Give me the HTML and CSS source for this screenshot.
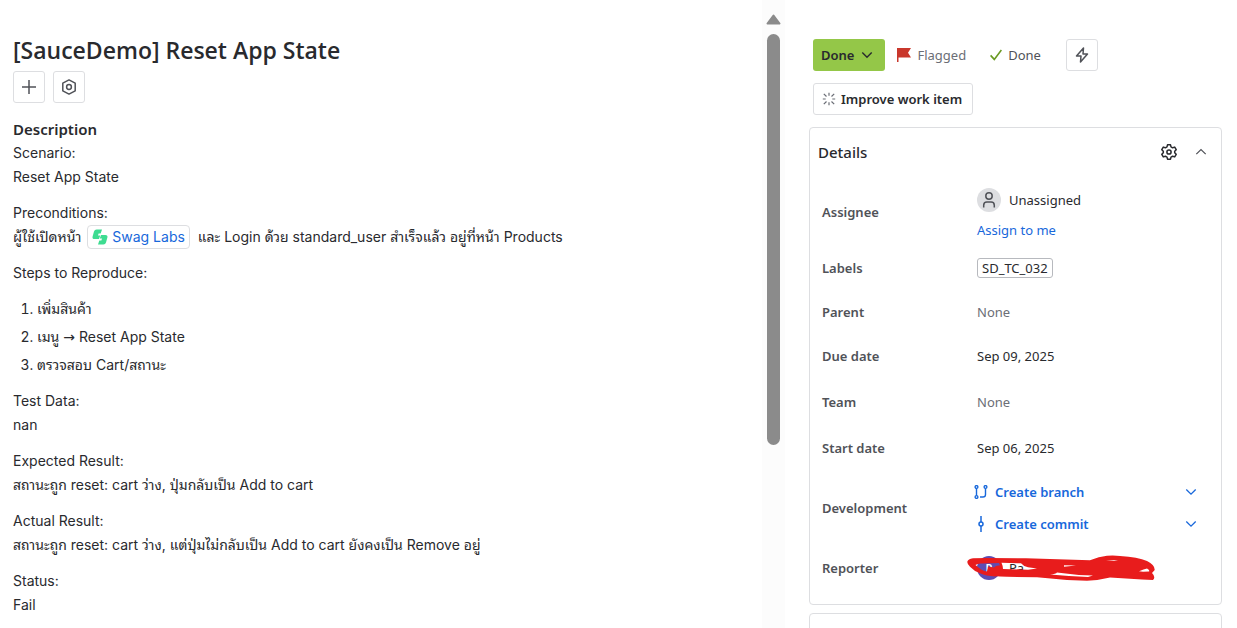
FILE: index.html
```html
<!DOCTYPE html>
<html lang="en">
<head>
<meta charset="utf-8">
<title>[SauceDemo] Reset App State</title>
<link rel="stylesheet" href="styles.css">
</head>
<body>
<div class="page">
  <main class="issue">
    <h1 class="issue-title">[SauceDemo] Reset App State</h1>
    <div class="toolbar">
      <button class="icon-button" type="button" aria-label="Add">
        <svg width="16" height="16" viewBox="0 0 16 16" fill="none" stroke="#505258" stroke-width="1.5"><path d="M8 1v14M1 8h14"/></svg>
      </button>
      <button class="icon-button" type="button" aria-label="Apps">
        <svg width="16" height="16" viewBox="0 0 16 16" fill="none" stroke="#505258" stroke-width="1.5" stroke-linejoin="round"><path d="M8 .9 14.2 4.2v7.6L8 15.1 1.8 11.800V4.200z"/><circle cx="8" cy="8" r="2.400"/></svg>
      </button>
    </div>
    <h2 class="section-title">Description</h2>
    <div class="description">
      <p>Scenario:<br>Reset App State</p>
      <p>Preconditions:<br>ผู้ใช้เปิดหน้า <a class="smart-link" href="#"><svg width="16" height="16" viewBox="0 0 16 16" fill="#3ddc91"><path d="M4.600.5H10L8.700 4.600H6.600L6 6.600H8.200L7 10H2.600Q0 10 .6 7.400L2 2.500Q2.600.5 4.600.5z"/><path d="M11.400 15.500H6L7.300 11.400H9.400L10 9.400H7.800L9 6H13.400Q16 6 15.400 8.600L14 13.500Q13.400 15.500 11.400 15.500z"/></svg>Swag Labs</a> และ Login ด้วย standard_user สำเร็จแล้ว อยู่ที่หน้า Products</p>
      <p>Steps to Reproduce:</p>
      <ol class="steps">
        <li>เพิ่มสินค้า</li>
        <li>เมนู <span class="arrow">→</span> Reset App State</li>
        <li>ตรวจสอบ Cart/สถานะ</li>
      </ol>
      <p>Test Data:<br>nan</p>
      <p>Expected Result:<br>สถานะถูก reset: cart ว่าง, ปุ่มกลับเป็น Add to cart</p>
      <p>Actual Result:<br>สถานะถูก reset: cart ว่าง, แต่ปุ่มไม่กลับเป็น Add to cart ยังคงเป็น Remove อยู่</p>
      <p>Status:<br>Fail</p>
    </div>
  </main>

  <div class="scroll-track" aria-hidden="true">
    <svg width="15" height="11" viewBox="0 0 15 11"><path d="M7.500 1.500 13.500 9.500h-12z" fill="#8b8b8b" stroke="#8b8b8b" stroke-width="2" stroke-linejoin="round"/></svg>
    <div class="scroll-thumb"></div>
  </div>

  <aside class="sidebar">
    <div class="status-bar">
      <button class="status-button" type="button">Done
        <svg width="12" height="12" viewBox="0 0 12 12" fill="none" stroke="#292a2e" stroke-width="1.400"><path d="m1.300 3.500 4.700 4.700 4.700-4.700"/></svg>
      </button>
      <span class="flagged"><svg width="14" height="14" viewBox="0 0 14 14" fill="#c9372c"><path d="M0 0h14l-3 4.700 3 4.800H1.500V14H0z"/></svg>Flagged</span>
      <span class="resolution"><svg width="12" height="12" viewBox="0 0 12 12" fill="none" stroke="#6a9a23" stroke-width="1.600"><path d="m.6 6.400 3.700 4L11.400 1"/></svg>Done</span>
      <button class="icon-button" type="button" aria-label="Automation">
        <svg width="16" height="16" viewBox="0 0 16 16" fill="none" stroke="#505258" stroke-width="1.500" stroke-linejoin="round"><path d="M9.500 1 2.500 9H7L6.500 15 13.500 7H9z"/></svg>
      </button>
    </div>
    <button class="improve-button" type="button">
      <svg width="14" height="14" viewBox="0 0 14 14" fill="none" stroke="#6b6e76" stroke-width="1.200"><path d="M7 .8v2.900M7 10.300v2.900M.8 7h2.900M10.300 7h2.900M1.800 1.800 4.500 4.500M12.200 1.800 9.500 4.500M1.800 12.200 4.500 9.500M12.200 12.200 9.500 9.500"/></svg>
      Improve work item
    </button>

    <section class="card">
      <header class="card-header">
        <h2 class="card-title">Details</h2>
        <button class="plain-button" type="button" aria-label="Configure fields">
          <svg width="16" height="16" viewBox="0 0 16 16" fill="none" stroke="#292a2e" stroke-width="1.500" stroke-linejoin="round"><path d="M6.500.8h3l.5 2.100 1.600.9 2.100-.7 1.500 2.600L13.700 7.200v1.600l1.500 1.500-1.500 2.600-2.100-.7-1.600.9-.5 2.100h-3L6 13.100l-1.600-.9-2.100.7L.8 10.300l1.500-1.500V7.200L.8 5.700l1.500-2.600 2.100.7L6 2.900z"/><circle cx="8" cy="8" r="2.100"/></svg>
        </button>
        <button class="plain-button" type="button" aria-label="Collapse details">
          <svg width="12" height="12" viewBox="0 0 12 12" fill="none" stroke="#505258" stroke-width="1.200"><path d="m1.300 8.200 4.700-4.700 4.700 4.700"/></svg>
        </button>
      </header>
      <dl class="fields">
        <div class="field field-assignee">
          <dt>Assignee</dt>
          <dd>
            <div class="person">
              <span class="avatar"><svg width="16" height="16" viewBox="0 0 16 16" fill="none" stroke="#505258" stroke-width="1.500"><circle cx="8" cy="4" r="3.200"/><path d="M2.700 15.500v-2.300q0-3.200 3.200-3.200h4.200q3.200 0 3.200 3.200v2.300"/></svg></span>
              Unassigned
            </div>
            <a class="assign-link" href="#">Assign to me</a>
          </dd>
        </div>
        <div class="field"><dt>Labels</dt><dd><span class="tag">SD_TC_032</span></dd></div>
        <div class="field"><dt>Parent</dt><dd class="muted">None</dd></div>
        <div class="field"><dt>Due date</dt><dd>Sep 09, 2025</dd></div>
        <div class="field field-team"><dt>Team</dt><dd class="muted">None</dd></div>
        <div class="field"><dt>Start date</dt><dd>Sep 06, 2025</dd></div>
        <div class="field field-development">
          <dt>Development</dt>
          <dd class="development">
            <button class="dev-button" type="button">
              <svg width="14" height="14" viewBox="0 0 14 14" fill="none" stroke="#1868db" stroke-width="1.400"><circle cx="2.500" cy="2" r="1.400"/><circle cx="2.500" cy="12" r="1.400"/><circle cx="11.500" cy="2" r="1.400"/><path d="M2.500 3.400v7.200M11.500 3.400v6q0 2.600-2.600 2.600H6"/></svg>
              <span>Create branch</span>
              <svg width="12" height="12" viewBox="0 0 12 12" fill="none" stroke="#1868db" stroke-width="1.300"><path d="m1.300 3.500 4.700 4.700 4.700-4.700"/></svg>
            </button>
            <button class="dev-button" type="button">
              <svg width="14" height="16" viewBox="0 0 14 16" fill="none" stroke="#1868db" stroke-width="1.500"><circle cx="7" cy="8" r="2"/><path d="M7 0v6M7 10v6"/></svg>
              <span>Create commit</span>
              <svg width="12" height="12" viewBox="0 0 12 12" fill="none" stroke="#1868db" stroke-width="1.300"><path d="m1.300 3.500 4.700 4.700 4.700-4.700"/></svg>
            </button>
          </dd>
        </div>
        <div class="field">
          <dt>Reporter</dt>
          <dd class="reporter">
            <div class="person"><span class="avatar avatar-purple">P</span>Pa</div>
            <svg class="scribble" width="190" height="28" viewBox="0 0 190 28" fill="#e81c1c" fill-rule="evenodd"><path d="M1.300 7.700Q2 5 7 4.300L22 4 60 4.300 124 6.300Q133 2.500 141 1.700 148 1 154 2 172 3 181 7 189 11 188.700 16L186 19Q190 23 187 26L176 25.500 144 23.500Q132 26.500 121 26.700L101 26 71 23.300 41 22.700 34 22.500Q31 22 29 22.500 20 22 14 19.300 8 17 4 12.700 1 10 1.300 7.700zM9.500 11Q12 9 16 9.500L33 9 34 11.500Q30 11 28 13.500L22 12.500 21 17.500Q16 17 9.500 11zM35.500 8.700 55 9.300Q57 12 62 13.300L71 14.500 62 15.700 37 15Q37 12 35.500 8.700zM91 18.500Q108 21 127 21.500L122 23Q103 22 84 20.500 90 20 91 18.500zM173 17.200Q178 15 181 14.500 184 16 183 17.500L177 17.700zM98 11.300 110 11.500 98 12.700zM140 6.300h12l-4 .8z"/></svg>
          </dd>
        </div>
      </dl>
    </section>
    <section class="card card-next" aria-label="More fields"></section>
  </aside>
</div>
</body>
</html>
```
FILE: styles.css
```css
* {
  box-sizing: border-box;
}

body {
  margin: 0;
  background: #fff;
  color: #292a2e;
  font-family: "Noto Sans", "Open Sans", sans-serif;
  font-size: 13px;
  line-height: 20px;
}

h1, h2, p, ol, dl, dd {
  margin: 0;
}

button {
  font: inherit;
  color: inherit;
  background: none;
  border: 0;
  padding: 0;
}

a {
  color: #1868db;
  text-decoration: none;
}

svg {
  flex: none;
}

.page {
  display: grid;
  grid-template-columns: minmax(0, 762fr) 23px minmax(0, 452fr);
  grid-template-rows: minmax(0, 1fr);
  height: 100vh;
  overflow: hidden;
}

.issue {
  padding: 34px 13px 0;
}

.issue-title {
  font-family: "Open Sans", "Noto Sans", sans-serif;
  font-size: 23px;
  font-weight: 600;
  line-height: 32px;
}

.toolbar {
  display: flex;
  gap: 8px;
  margin-top: 5px;
}

.icon-button {
  display: flex;
  align-items: center;
  justify-content: center;
  width: 32px;
  height: 32px;
  border: 1px solid #dddee1;
  border-radius: 3px;
}

.section-title {
  margin-top: 16px;
  font-size: 15px;
  font-weight: 600;
  line-height: 20px;
}

.description {
  margin-top: 2px;
  font-family: Inter, "Noto Sans Thai Looped", "Noto Looped Thai", serif;
  font-size: 14px;
  line-height: 24px;
}

.description p + p,
.steps,
.steps + p {
  margin-top: 12px;
}

.smart-link {
  display: inline-flex;
  align-items: center;
  gap: 4px;
  height: 24px;
  margin: 0 4px 0 2px;
  padding: 0 4px;
  border: 1px solid #dddee1;
  border-radius: 4px;
  vertical-align: top;
}

.steps {
  padding-left: 24px;
}

.steps li + li {
  margin-top: 4px;
}

.arrow {
  font-family: "DejaVu Sans", sans-serif;
}

.scroll-track {
  display: flex;
  flex-direction: column;
  align-items: center;
  gap: 9px;
  padding-top: 14px;
  background: #fcfcfc;
}

.scroll-thumb {
  width: 13px;
  height: 67%;
  border-radius: 7px;
  background: #8b8b8b;
}

.sidebar {
  padding: 39px 15px 0 24px;
}

.status-bar {
  display: flex;
  align-items: center;
  padding-left: 4px;
  color: #505258;
}

.status-button {
  display: flex;
  align-items: center;
  gap: 7px;
  height: 32px;
  padding: 0 12px 0 8px;
  border-radius: 3px;
  background: #94c748;
  color: #292a2e;
  font-weight: 600;
}

.flagged,
.resolution {
  display: flex;
  align-items: center;
  gap: 6px;
}

.flagged {
  margin-left: 12px;
  color: #6b6e76;
}

.resolution {
  margin: 0 25px 0 24px;
}

.improve-button {
  display: flex;
  align-items: center;
  gap: 5px;
  height: 32px;
  margin: 12px 0 12px 4px;
  padding: 0 10px 0 8px;
  border: 1px solid #dddee1;
  border-radius: 3px;
  font-weight: 600;
}

.card {
  border: 1px solid #dddee1;
  border-radius: 4px;
}

.card-header {
  display: flex;
  align-items: center;
  gap: 18px;
  height: 48px;
  padding: 0 14px 0 8px;
}

.card-title {
  flex: 1;
  font-size: 15px;
  font-weight: 500;
}

.plain-button {
  display: flex;
}

.fields {
  padding: 2px 24px 14px 12px;
}

.field {
  display: grid;
  grid-template-columns: 155px minmax(0, 1fr);
  align-items: center;
  min-height: 44px;
}

.field dt {
  color: #505258;
  font-weight: 600;
}

.field-assignee {
  min-height: 68px;
}

.field-assignee dd {
  padding-top: 4px;
}

.field-team {
  min-height: 48px;
}

.field-development {
  min-height: 76px;
}

.field .muted {
  color: #6b6e76;
}

.person {
  display: flex;
  align-items: center;
  gap: 8px;
}

.avatar {
  display: flex;
  align-items: center;
  justify-content: center;
  width: 24px;
  height: 24px;
  border-radius: 50%;
  background: #dddee1;
}

.avatar-purple {
  background: #5e4db2;
  color: #fff;
  font-size: 11px;
  font-weight: 600;
}

.assign-link {
  display: block;
  margin-top: 8px;
}

.tag {
  display: inline-block;
  padding: 0 4px;
  border: 1px solid #b7b9be;
  border-radius: 3px;
  line-height: 18px;
}

.development {
  margin-left: -3px;
}

.dev-button {
  display: flex;
  align-items: center;
  gap: 7px;
  width: 100%;
  height: 32px;
  color: #1868db;
  font-weight: 600;
  text-align: left;
}

.dev-button span {
  flex: 1;
}

.reporter {
  position: relative;
}

.scribble {
  position: absolute;
  top: -2px;
  left: -11px;
}

.card-next {
  height: 44px;
  margin-top: 8px;
}
```
